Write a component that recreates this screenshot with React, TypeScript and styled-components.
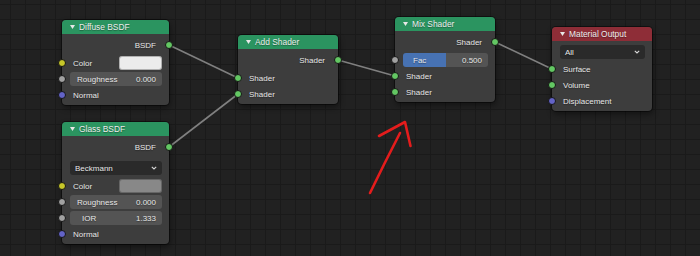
import React from 'react';
import styled, { createGlobalStyle } from 'styled-components';

const GlobalStyle = createGlobalStyle`
  html, body {
    margin: 0;
    padding: 0;
    background: #1f1f1f;
  }
  body {
    font-family: "Liberation Sans", Arial, sans-serif;
  }
`;

const Canvas = styled.div`
  position: relative;
  width: 700px;
  height: 256px;
  overflow: hidden;
  background-color: #212121;
  background-image:
    linear-gradient(to right, #1a1a1a 1px, transparent 1px),
    linear-gradient(to bottom, #1a1a1a 1px, transparent 1px);
  background-size: 15px 15px;
  background-position: 10px 4px;
`;

const Overlay = styled.svg<{ $top?: boolean }>`
  position: absolute;
  left: 0;
  top: 0;
  width: 700px;
  height: 256px;
  pointer-events: none;
  z-index: ${({ $top }) => ($top ? 5 : 0)};
`;

const NodeBox = styled.div<{ $x: number; $y: number; $w: number }>`
  position: absolute;
  left: ${({ $x }) => $x}px;
  top: ${({ $y }) => $y}px;
  width: ${({ $w }) => $w}px;
  z-index: 2;
  background: #3d3d3d;
  border-radius: 4px;
  box-shadow: 0 0 0 1px rgba(0, 0, 0, 0.45), 1px 3px 6px rgba(0, 0, 0, 0.45);
  color: #e6e6e6;
  font-size: 8px;
  text-shadow: 0 1px 1px rgba(0, 0, 0, 0.35);
`;

const NodeHeader = styled.div<{ $color: string }>`
  height: 14px;
  display: flex;
  align-items: center;
  gap: 4px;
  padding-left: 8px;
  background: ${({ $color }) => $color};
  border-radius: 4px 4px 0 0;
  color: #ececec;
  font-size: 8.4px;
`;

const NodeBody = styled.div`
  display: flex;
  flex-direction: column;
  padding: 3px 0 2px;
`;

const Spacer = styled.div<{ $h: number }>`
  height: ${({ $h }) => $h}px;
`;

const OutputRow = styled.div`
  position: relative;
  height: 16px;
  display: flex;
  align-items: center;
  justify-content: flex-end;
  padding-right: 13px;
`;

const InputRow = styled.div`
  position: relative;
  height: 16px;
  display: flex;
  align-items: center;
  justify-content: space-between;
  padding: 0 7px 0 11px;
`;

const FieldRow = styled.div`
  position: relative;
  height: 16px;
  display: flex;
  align-items: center;
  padding: 0 7px 0 8px;
`;

const Socket = styled.span<{ $color: string; $side: 'left' | 'right' }>`
  position: absolute;
  top: 50%;
  ${({ $side }) => $side}: -4px;
  width: 6px;
  height: 6px;
  margin-top: -4px;
  border-radius: 50%;
  background: ${({ $color }) => $color};
  border: 1px solid #151515;
  z-index: 3;
`;

const NumField = styled.div<{ $fill?: number; $indent?: number }>`
  flex: 1;
  height: 14px;
  display: flex;
  align-items: center;
  justify-content: space-between;
  padding: 0 6px 0 ${({ $indent }) => $indent ?? 7}px;
  border-radius: 3px;
  background: ${({ $fill }) =>
    $fill
      ? `linear-gradient(to right, #4772b3 ${$fill}%, #545454 ${$fill}%)`
      : '#545454'};
`;

const Dropdown = styled.div`
  flex: 1;
  height: 14px;
  display: flex;
  align-items: center;
  justify-content: space-between;
  padding: 0 5px;
  border-radius: 3px;
  background: #2a2a2a;
`;

const Swatch = styled.div<{ $color: string }>`
  width: 43px;
  height: 14px;
  border-radius: 3px;
  background: ${({ $color }) => $color};
  box-shadow: inset 0 0 0 1px rgba(0, 0, 0, 0.25);
`;

const SOCKET = {
  shader: '#63c763',
  color: '#c7c729',
  float: '#a1a1a1',
  vector: '#6363c7',
};

const Arrow = () => (
  <svg width="5" height="4" viewBox="0 0 5 4">
    <path d="M0 0 L5 0 L2.5 4 Z" fill="#e8e8e8" />
  </svg>
);

const Chevron = () => (
  <svg width="6" height="4" viewBox="0 0 6 4">
    <path d="M0.8 0.8 L3 3 L5.2 0.8" fill="none" stroke="#d8d8d8" strokeWidth="1.1" />
  </svg>
);

type NodeProps = {
  x: number;
  y: number;
  w: number;
  title: string;
  color: string;
  children: React.ReactNode;
};

const Node = ({ x, y, w, title, color, children }: NodeProps) => (
  <NodeBox $x={x} $y={y} $w={w}>
    <NodeHeader $color={color}>
      <Arrow />
      {title}
    </NodeHeader>
    <NodeBody>{children}</NodeBody>
  </NodeBox>
);

const Output = ({ label, color }: { label: string; color: string }) => (
  <OutputRow>
    {label}
    <Socket $side="right" $color={color} />
  </OutputRow>
);

const Input = ({ label, color, children }: { label: string; color: string; children?: React.ReactNode }) => (
  <InputRow>
    <span>{label}</span>
    {children}
    <Socket $side="left" $color={color} />
  </InputRow>
);

const Value = ({ label, value, fill, indent }: { label: string; value: string; fill?: number; indent?: number }) => (
  <FieldRow>
    <NumField $fill={fill} $indent={indent}>
      <span>{label}</span>
      <span>{value}</span>
    </NumField>
    <Socket $side="left" $color={SOCKET.float} />
  </FieldRow>
);

const Select = ({ value }: { value: string }) => (
  <FieldRow>
    <Dropdown>
      <span>{value}</span>
      <Chevron />
    </Dropdown>
  </FieldRow>
);

const GREEN = '#2b9460';
const RED = '#8e2d37';

// straight links between sockets: [x1, y1, x2, y2]
const links: [number, number, number, number][] = [
  [169, 45, 238, 78],
  [169, 147, 238, 94],
  [338, 60, 395, 76],
  [495, 42, 552, 69],
];

export default function App() {
  return (
    <>
      <GlobalStyle />
      <Canvas>
        <Overlay>
          {links.map(([x1, y1, x2, y2], i) => (
            <line key={i} x1={x1} y1={y1} x2={x2} y2={y2} stroke="#808080" strokeWidth="1.6" />
          ))}
        </Overlay>

        <Node x={62} y={20} w={107} title="Diffuse BSDF" color={GREEN}>
          <Output label="BSDF" color={SOCKET.shader} />
          <Spacer $h={2} />
          <Input label="Color" color={SOCKET.color}>
            <Swatch $color="#ececec" />
          </Input>
          <Value label="Roughness" value="0.000" />
          <Input label="Normal" color={SOCKET.vector} />
        </Node>

        <Node x={62} y={122} w={107} title="Glass BSDF" color={GREEN}>
          <Output label="BSDF" color={SOCKET.shader} />
          <Spacer $h={5} />
          <Select value="Beckmann" />
          <Spacer $h={2} />
          <Input label="Color" color={SOCKET.color}>
            <Swatch $color="#888888" />
          </Input>
          <Value label="Roughness" value="0.000" />
          <Value label="IOR" value="1.333" indent={12} />
          <Input label="Normal" color={SOCKET.vector} />
        </Node>

        <Node x={238} y={35} w={100} title="Add Shader" color={GREEN}>
          <Output label="Shader" color={SOCKET.shader} />
          <Spacer $h={2} />
          <Input label="Shader" color={SOCKET.shader} />
          <Input label="Shader" color={SOCKET.shader} />
        </Node>

        <Node x={395} y={17} w={100} title="Mix Shader" color={GREEN}>
          <Output label="Shader" color={SOCKET.shader} />
          <Spacer $h={2} />
          <Value label="Fac" value="0.500" fill={50} indent={10} />
          <Input label="Shader" color={SOCKET.shader} />
          <Input label="Shader" color={SOCKET.shader} />
        </Node>

        <Node x={552} y={27} w={100} title="Material Output" color={RED}>
          <Select value="All" />
          <Spacer $h={1} />
          <Input label="Surface" color={SOCKET.shader} />
          <Input label="Volume" color={SOCKET.shader} />
          <Input label="Displacement" color={SOCKET.vector} />
        </Node>

        <Overlay $top>
          <g fill="none" stroke="#e41c1c" strokeWidth="2.6" strokeLinecap="round" strokeLinejoin="round">
            <path d="M370 193 Q384 164 400 133" />
            <path d="M379 136 L405 122 L410.5 146" />
          </g>
        </Overlay>
      </Canvas>
    </>
  );
}
